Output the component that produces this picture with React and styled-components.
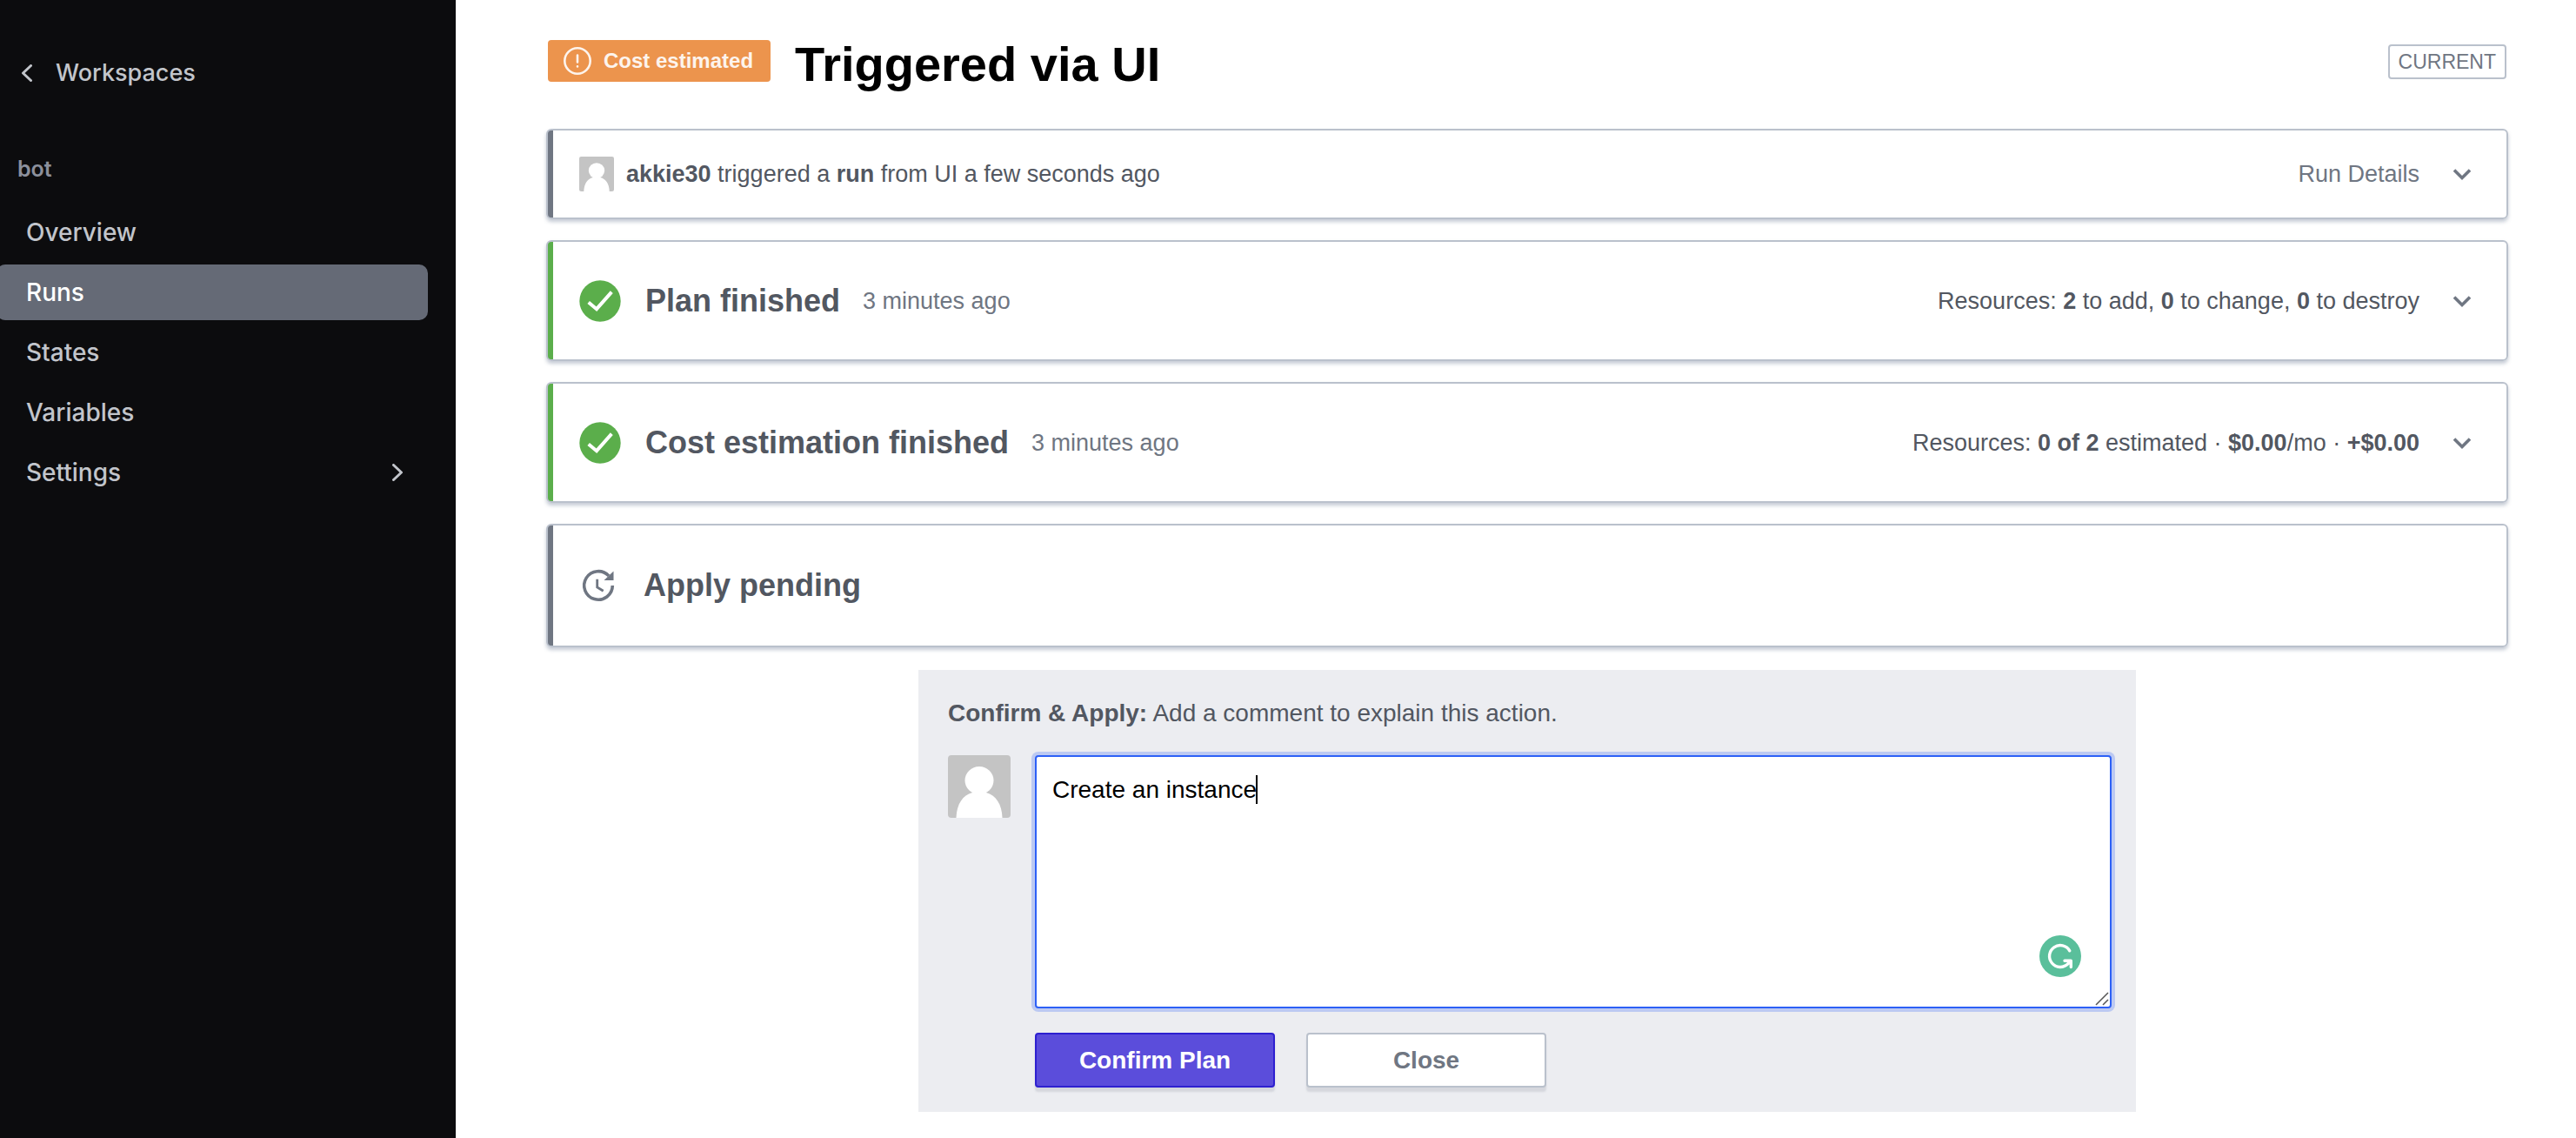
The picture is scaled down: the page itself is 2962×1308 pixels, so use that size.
import React from 'react';
import styled, { createGlobalStyle } from 'styled-components';

const GlobalStyle = createGlobalStyle`
  *, *::before, *::after { box-sizing: border-box; }
  body {
    margin: 0;
    background: #fff;
    color: #525761;
    font-family: "Liberation Sans", Helvetica, Arial, sans-serif;
    font-size: 27px;
    line-height: 32px;
  }
`;

const Layout = styled.div`
  display: flex;
  min-height: 100vh;
`;

const Sidebar = styled.nav`
  flex: 0 0 524px;
  padding: 52px 32px 52px 0;
  background: #0c0c0e;
  color: #c2c5cb;
  font-family: Inter, sans-serif;
  font-size: 28px;
  font-weight: 500;
`;

const SideLink = styled.a`
  display: flex;
  align-items: center;
  justify-content: space-between;
  height: 64px;
  padding: 0 28px 0 34px;
  border-radius: 10px;
  color: ${(p) => (p.$active ? '#fff' : 'inherit')};
  background: ${(p) => (p.$active ? '#656a76' : 'transparent')};
  text-decoration: none;
`;

const BackLink = styled(SideLink)`
  justify-content: flex-start;
  gap: 26px;
  padding: 0 24px;
  font-size: 27px;
`;

const Workspace = styled.h2`
  margin: 62px 0 25px 20px;
  font-size: 25px;
  font-weight: 600;
  line-height: 32px;
  color: #8c909c;
`;

const SideList = styled.ul`
  display: grid;
  gap: 5px;
  margin: 0 0 0 -4px;
  padding: 0;
  list-style: none;
`;

const Main = styled.main`
  flex: 1;
  min-width: 0;
  padding: 42px 78px 24px 104px;
`;

const Header = styled.header`
  display: flex;
  align-items: center;
  margin-bottom: 42px;
  padding: 0 2px;
`;

const StatusBadge = styled.span`
  display: flex;
  align-items: center;
  gap: 14px;
  height: 48px;
  margin-bottom: 8px;
  padding: 0 20px 0 18px;
  border-radius: 4px;
  background: #ec944d;
  color: #fdf4ed;
  font-size: 24px;
  font-weight: 700;
`;

const Title = styled.h1`
  flex: 1;
  margin: 0 28px;
  color: #000;
  font-size: 56px;
  line-height: 64px;
`;

const CurrentTag = styled.span`
  margin-bottom: 6px;
  padding: 2px 10px;
  border: 2px solid #bac1cc;
  border-radius: 4px;
  color: #6f7682;
  font-size: 23px;
`;

const Stages = styled.div`
  display: grid;
  gap: 24px;
`;

const cardHeights = { compact: 104, regular: 139, pending: 142 };

const Card = styled.section`
  display: flex;
  align-items: center;
  min-height: ${(p) => cardHeights[p.$kind || 'regular']}px;
  padding: 0 40px 0 36px;
  border: 2px solid #bac1cc;
  border-radius: 6px;
  background: linear-gradient(to right, ${(p) => (p.$done ? '#5bae4b' : '#6f7682')} 6px, #fff 6px);
  box-shadow: 0 3px 4px rgba(90, 105, 135, 0.35);
`;

const CardTitle = styled.h2`
  margin: 0 0 0 28px;
  font-size: 36px;
  line-height: 44px;
`;

const Time = styled.span`
  margin-left: 26px;
  color: #6f7682;
`;

const Trigger = styled.p`
  margin: 0 0 0 14px;
`;

const Summary = styled.p`
  margin: 0 0 0 auto;
  color: ${(p) => (p.$muted ? '#6f7682' : 'inherit')};
`;

const ToggleButton = styled.button`
  display: flex;
  align-items: center;
  margin-left: 38px;
  padding: 0;
  border: 0;
  background: none;
  color: #6f7682;
`;

const ConfirmPanel = styled.form`
  width: 100%;
  max-width: 1400px;
  margin: 26px auto 0;
  padding: 34px 28px 28px 34px;
  background: #ecedf1;
  font-size: 28px;
`;

const Prompt = styled.label`
  display: block;
  margin-bottom: 32px;
`;

const CommentRow = styled.div`
  display: flex;
  align-items: flex-start;
  gap: 28px;
`;

const CommentBody = styled.div`
  flex: 1;
`;

const CommentBox = styled.div`
  position: relative;
`;

const CommentInput = styled.textarea`
  display: block;
  width: 100%;
  height: 291px;
  padding: 22px 18px;
  border: 2px solid #2d60f6;
  border-radius: 4px;
  outline: 0;
  box-shadow: 0 0 0 4px rgba(45, 96, 246, 0.25);
  background: #fff;
  color: #000;
  caret-color: transparent;
  font: inherit;
  resize: none;
`;

const Caret = styled.span`
  position: absolute;
  top: 23px;
  left: 254px;
  width: 2px;
  height: 33px;
  background: #000;
`;

const GrammarMark = styled.svg`
  position: absolute;
  right: 35px;
  bottom: 36px;
`;

const ResizeGrip = styled.svg`
  position: absolute;
  right: 3px;
  bottom: 3px;
`;

const Actions = styled.div`
  display: flex;
  gap: 36px;
  margin-top: 28px;
`;

const Button = styled.button`
  width: 276px;
  height: 63px;
  padding: 0;
  border: 2px solid ${(p) => (p.$primary ? '#2e20d0' : '#bac1cc')};
  border-radius: 4px;
  background: ${(p) => (p.$primary ? '#5b4ddb' : '#fff')};
  box-shadow: 0 5px 2px rgba(100, 108, 125, 0.17);
  color: ${(p) => (p.$primary ? '#fff' : '#6f7682')};
  font: inherit;
  font-weight: 700;
`;

const Avatar = ({ size }) => (
  <svg width={size} height={size} viewBox="0 0 72 72" role="img" aria-label="akkie30">
    <rect width="72" height="72" rx="4" fill="#c4c4c4" />
    <ellipse cx="36" cy="29" rx="16.5" ry="16" fill="#fff" />
    <path d="M9.5 72C10 56 17 46 28 43h16c11 3 18 13 18.500 29z" fill="#fff" />
  </svg>
);

const Alert = () => (
  <svg width="32" height="32" viewBox="0 0 32 32" fill="none" stroke="currentColor" strokeWidth="2.6" strokeLinecap="round">
    <circle cx="16" cy="16" r="14.7" />
    <path d="M16 9.5v8M16 22.2v.3" />
  </svg>
);

const Done = () => (
  <svg width="48" height="48" viewBox="0 0 48 48">
    <circle cx="24" cy="24" r="23.7" fill="#5bae4b" />
    <path d="M10.700 25.500L20 33.200L37.300 13.700" fill="none" stroke="#fff" strokeWidth="4" />
  </svg>
);

const Pending = () => (
  <svg width="46" height="48" viewBox="0 0 46 48" fill="none" stroke="#6f7682">
    <path d="M38.300 24A16.300 16.300 0 1 1 34 12.900" strokeWidth="3.6" />
    <path d="M39.500 7.500v10.500H28.500z" fill="#6f7682" stroke="none" />
    <path d="M20.700 16.700v9.300l7 4.300" strokeWidth="2.8" />
  </svg>
);

const ChevronDown = () => (
  <svg width="22" height="16" viewBox="0 0 22 16" fill="none" stroke="currentColor" strokeWidth="3.6">
    <path d="M2 3.500l9 9 9-9" />
  </svg>
);

const ChevronSide = ({ left }) => (
  <svg width="14" height="20" viewBox="0 0 14 20" fill="none" stroke="currentColor" strokeWidth="3" strokeLinecap="round" strokeLinejoin="round">
    <path d={left ? 'M11.500 1.500L2.500 10l9 8.500' : 'M2.500 1.500l9 8.500-9 8.500'} />
  </svg>
);

const Toggle = ({ label }) => (
  <ToggleButton type="button" aria-label={label}>
    <ChevronDown />
  </ToggleButton>
);

export default function App() {
  return (
    <Layout>
      <GlobalStyle />
      <Sidebar>
        <BackLink href="#workspaces">
          <ChevronSide left />
          Workspaces
        </BackLink>
        <Workspace>bot</Workspace>
        <SideList>
          <li><SideLink href="#overview">Overview</SideLink></li>
          <li><SideLink href="#runs" $active aria-current="page">Runs</SideLink></li>
          <li><SideLink href="#states">States</SideLink></li>
          <li><SideLink href="#variables">Variables</SideLink></li>
          <li><SideLink href="#settings">Settings<ChevronSide /></SideLink></li>
        </SideList>
      </Sidebar>
      <Main>
        <Header>
          <StatusBadge><Alert />Cost estimated</StatusBadge>
          <Title>Triggered via UI</Title>
          <CurrentTag>CURRENT</CurrentTag>
        </Header>
        <Stages>
          <Card $kind="compact">
            <Avatar size={40} />
            <Trigger><b>akkie30</b> triggered a <b>run</b> from UI a few seconds ago</Trigger>
            <Summary $muted>Run Details</Summary>
            <Toggle label="Show run details" />
          </Card>
          <Card $done>
            <Done />
            <CardTitle>Plan finished</CardTitle>
            <Time>3 minutes ago</Time>
            <Summary>Resources: <b>2</b> to add, <b>0</b> to change, <b>0</b> to destroy</Summary>
            <Toggle label="Show plan" />
          </Card>
          <Card $done>
            <Done />
            <CardTitle>Cost estimation finished</CardTitle>
            <Time>3 minutes ago</Time>
            <Summary>Resources: <b>0 of 2</b> estimated · <b>$0.00</b>/mo · <b>+$0.00</b></Summary>
            <Toggle label="Show cost estimation" />
          </Card>
          <Card $kind="pending">
            <Pending />
            <CardTitle>Apply pending</CardTitle>
          </Card>
        </Stages>
        <ConfirmPanel>
          <Prompt htmlFor="comment"><b>Confirm &amp; Apply:</b> Add a comment to explain this action.</Prompt>
          <CommentRow>
            <Avatar size={72} />
            <CommentBody>
              <CommentBox>
                <CommentInput id="comment" defaultValue="Create an instance" />
                <Caret />
                <GrammarMark width="48" height="48" viewBox="0 0 48 48" fill="none" stroke="#fff" strokeWidth="3.4" strokeLinecap="round" strokeLinejoin="round">
                  <circle cx="24" cy="24" r="24" fill="#5abf9b" stroke="none" />
                  <path d="M34.800 17.800A12.450 12.450 0 1 0 32.800 32.800L36.200 29.500M29 29.200h7.300V36.500" />
                </GrammarMark>
                <ResizeGrip width="16" height="16" viewBox="0 0 16 16" stroke="#555" strokeWidth="1.5">
                  <path d="M1 15L15 1M9 15l6-6" />
                </ResizeGrip>
              </CommentBox>
              <Actions>
                <Button type="button" $primary>Confirm Plan</Button>
                <Button type="button">Close</Button>
              </Actions>
            </CommentBody>
          </CommentRow>
        </ConfirmPanel>
      </Main>
    </Layout>
  );
}
